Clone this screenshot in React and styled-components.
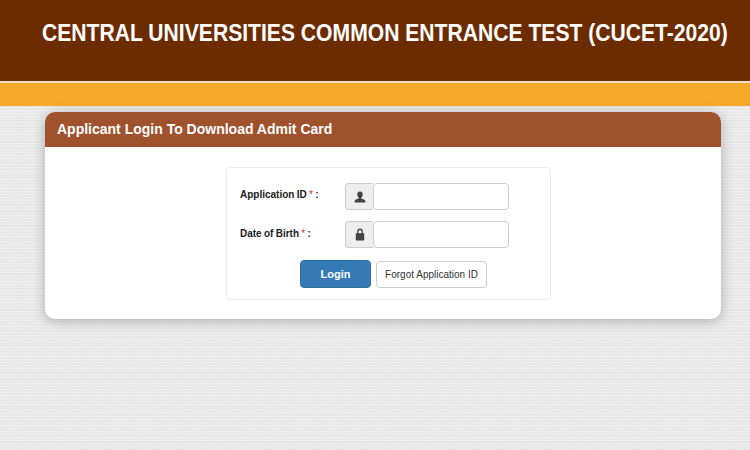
import React from "react";
import styled, { createGlobalStyle } from "styled-components";

const GlobalStyle = createGlobalStyle`
  html, body {
    margin: 0;
    padding: 0;
  }
  body {
    font-family: "Liberation Sans", Arial, sans-serif;
    background-color: #e7e7e7;
    background-image:
      repeating-linear-gradient(0deg, rgba(255,255,255,0.28) 0 1px, transparent 1px 3px),
      repeating-linear-gradient(0deg, rgba(0,0,0,0.02) 0 1px, transparent 1px 7px),
      repeating-linear-gradient(90deg, rgba(255,255,255,0.05) 0 11px, transparent 11px 23px);
  }
`;

const Page = styled.div`
  width: 750px;
  height: 450px;
  overflow: hidden;
`;

const Banner = styled.header`
  height: 81px;
  background: #6d2c00;
  color: #fff;
  padding: 18px 0 0 42px;
  box-sizing: border-box;
`;

// the title in the shot is squeezed sideways, so scale rather than shrink it
const BannerTitle = styled.h1`
  margin: 0;
  font-size: 23px;
  line-height: 30px;
  font-weight: 700;
  white-space: nowrap;
  transform: scaleX(0.918);
  transform-origin: left center;
`;

const Stripe = styled.div`
  height: 23px;
  background: #f5a92b;
  border-top: 2px solid #fbe3c0;
`;

const Card = styled.section`
  width: 676px;
  height: 207px;
  margin: 6px 0 0 45px;
  background: #fff;
  border-radius: 10px;
  box-shadow: 0 2px 12px rgba(0, 0, 0, 0.26);
`;

const CardHeader = styled.div`
  height: 35px;
  padding-left: 12px;
  background: #a0522d;
  border-radius: 10px 10px 0 0;
  color: #fff;
  font-size: 14px;
  font-weight: 700;
  line-height: 35px;
`;

const CardBody = styled.div`
  display: flex;
  justify-content: center;
  padding: 20px 0 0 11px;
`;

const LoginBox = styled.form`
  width: 325px;
  height: 133px;
  box-sizing: border-box;
  padding: 15px 0 0 13px;
  border: 1px solid #ececec;
  border-radius: 4px;
  background: #fff;
`;

const Row = styled.div`
  display: flex;
  align-items: flex-start;
  height: 27px;
  margin-bottom: 11px;
`;

const Label = styled.label`
  width: 105px;
  font-size: 10px;
  font-weight: 700;
  word-spacing: -0.5px;
  line-height: ${(props) => props.$lineHeight || 24}px;
  color: #222;
`;

const Star = styled.span`
  color: #d9262c;
  font-weight: 400;
`;

const Addon = styled.span`
  display: flex;
  align-items: center;
  justify-content: center;
  width: 28px;
  height: 27px;
  box-sizing: border-box;
  background: #eeeeee;
  border: 1px solid #ccc;
  border-right: 0;
  border-radius: 4px 0 0 4px;
  color: #444;
`;

const TextInput = styled.input`
  width: 136px;
  height: 27px;
  box-sizing: border-box;
  padding: 0 8px;
  border: 1px solid #ccc;
  border-radius: 4px;
  background: #fff;
  outline: none;
`;

const Actions = styled.div`
  display: flex;
  align-items: center;
  gap: 5px;
  padding: 1px 0 0 60px;
`;

const LoginButton = styled.button`
  width: 71px;
  height: 28px;
  padding: 0;
  border: 1px solid #2e6da4;
  border-radius: 4px;
  background: #337ab7;
  color: #fff;
  font: 700 11px "Liberation Sans", Arial, sans-serif;
`;

const ForgotButton = styled.button`
  width: 111px;
  height: 27px;
  padding: 0;
  border: 1px solid #ccc;
  border-radius: 4px;
  background: #fff;
  color: #333;
  font: 400 10px "Liberation Sans", Arial, sans-serif;
`;

const UserIcon = () => (
  <svg width="12" height="12" viewBox="0 0 12 12" fill="currentColor">
    <path d="M6 .4c1.800 0 2.700 1.200 2.700 3 0 1.300-.5 2.500-1.300 3.200v1c.5.500 3.900.900 3.900 2.500v1.500H.7V10.100c0-1.600 3.400-2 3.900-2.500v-1C3.800 5.900 3.300 4.700 3.300 3.400c0-1.800.9-3 2.700-3z" />
  </svg>
);

const LockIcon = () => (
  <svg width="12" height="13" viewBox="0 0 12 13" fill="currentColor">
    <path d="M6 .6C4.200.6 3.100 1.800 3.100 3.600v1.600h-.6c-.4 0-.7.3-.7.7v6c0 .4.300.7.700.7h7c.4 0 .7-.3.700-.7v-6c0-.4-.3-.7-.7-.7h-.6V3.600C8.900 1.800 7.800.6 6 .6zM4.500 5.200V3.600c0-1 .5-1.600 1.500-1.600s1.500.6 1.500 1.600v1.600h-3z" />
  </svg>
);

export default function App() {
  return (
    <Page>
      <GlobalStyle />
      <Banner>
        <BannerTitle>CENTRAL UNIVERSITIES COMMON ENTRANCE TEST (CUCET-2020)</BannerTitle>
      </Banner>
      <Stripe />
      <Card>
        <CardHeader>Applicant Login To Download Admit Card</CardHeader>
        <CardBody>
          <LoginBox>
            <Row>
              <Label>
                Application ID <Star>*</Star> :
              </Label>
              <Addon>
                <UserIcon />
              </Addon>
              <TextInput />
            </Row>
            <Row>
              <Label $lineHeight={26}>
                Date of Birth <Star>*</Star> :
              </Label>
              <Addon>
                <LockIcon />
              </Addon>
              <TextInput />
            </Row>
            <Actions>
              <LoginButton type="button">Login</LoginButton>
              <ForgotButton type="button">Forgot Application ID</ForgotButton>
            </Actions>
          </LoginBox>
        </CardBody>
      </Card>
    </Page>
  );
}
